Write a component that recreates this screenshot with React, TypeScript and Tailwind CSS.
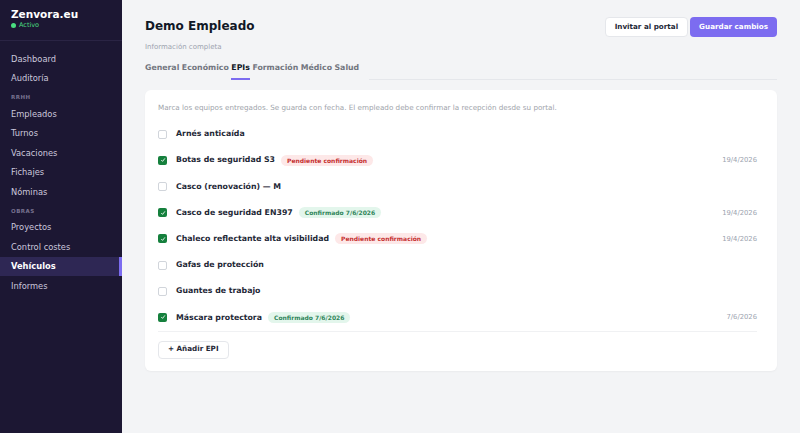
const nav = [
    { type: 'item', label: 'Dashboard' },
    { type: 'item', label: 'Auditoría' },
    { type: 'group', label: 'RRHH' },
    { type: 'item', label: 'Empleados' },
    { type: 'item', label: 'Turnos' },
    { type: 'item', label: 'Vacaciones' },
    { type: 'item', label: 'Fichajes' },
    { type: 'item', label: 'Nóminas' },
    { type: 'group', label: 'OBRAS' },
    { type: 'item', label: 'Proyectos' },
    { type: 'item', label: 'Control costes' },
    { type: 'item', label: 'Vehículos', active: true },
    { type: 'item', label: 'Informes' },
]

const tabs = ['General', 'Económico', 'EPIs', 'Formación', 'Médico', 'Salud']

type Epi = {
    name: string
    checked: boolean
    status?: 'pending' | 'confirmed'
    statusText?: string
    date?: string
}

const epis: Epi[] = [
    { name: 'Arnés anticaída', checked: false },
    { name: 'Botas de seguridad S3', checked: true, status: 'pending', statusText: 'Pendiente confirmación', date: '19/4/2026' },
    { name: 'Casco (renovación) — M', checked: false },
    { name: 'Casco de seguridad EN397', checked: true, status: 'confirmed', statusText: 'Confirmado 7/6/2026', date: '19/4/2026' },
    { name: 'Chaleco reflectante alta visibilidad', checked: true, status: 'pending', statusText: 'Pendiente confirmación', date: '19/4/2026' },
    { name: 'Gafas de protección', checked: false },
    { name: 'Guantes de trabajo', checked: false },
    { name: 'Máscara protectora', checked: true, status: 'confirmed', statusText: 'Confirmado 7/6/2026', date: '7/6/2026' },
]

export default function App() {
    return (
        <div className="flex h-[433px] w-full overflow-hidden bg-[#f3f4f6] font-['DejaVu_Sans',sans-serif]">
            <Sidebar></Sidebar>
            <Main></Main>
        </div>
    )
}

const Sidebar = function () {
    return (
        <div className="w-[122px] shrink-0 bg-[#1c1733] flex flex-col">
            <div className="px-[11px] pt-[8px] pb-[10px] border-b border-[#2a2444]">
                <div className="text-[10.5px] leading-[13px] font-bold text-white">Zenvora.eu</div>
                <div className="flex items-center gap-[3px] text-[6.5px] leading-[9px] text-[#4ade80]">
                    <span className="w-[5px] h-[5px] rounded-full bg-[#4ade80]"></span>
                    Activo
                </div>
            </div>
            <div className="pt-[8px] flex flex-col">
                {nav.map((n) =>
                    n.type === 'group' ? (
                        <div key={n.label} className="h-[16px] pl-[11px] pt-[6px] text-[5.5px] leading-[7px] font-bold tracking-[0.5px] text-[#77718f]">
                            {n.label}
                        </div>
                    ) : (
                        <div
                            key={n.label}
                            className={
                                n.active
                                    ? 'h-[19.5px] flex items-center pl-[11px] text-[8.3px] font-bold text-white bg-[#2e2754] border-r-[3px] border-[#7c6cf0]'
                                    : 'h-[19.5px] flex items-center pl-[11px] text-[8.3px] text-[#cbc7dc]'
                            }
                        >
                            {n.label}
                        </div>
                    )
                )}
            </div>
        </div>
    )
}

const Main = function () {
    return (
        <div className="flex-1 px-[23px] pt-[18px]">
            <div className="flex justify-between items-start">
                <div>
                    <div className="text-[12px] leading-[16px] font-bold text-[#111827]">Demo Empleado</div>
                    <div className="mt-[8px] text-[7px] leading-[10px] text-[#9ca3af]">Información completa</div>
                </div>
                <div className="flex gap-[2px] -mt-[1px]">
                    <div className="h-[20px] px-[9px] flex items-center bg-white border border-[#e5e7eb] rounded-[4px] text-[7.2px] font-bold text-[#1f2937]">
                        Invitar al portal
                    </div>
                    <div className="h-[20px] px-[9px] flex items-center bg-[#7c6cf0] rounded-[4px] text-[7.2px] font-bold text-white">
                        Guardar cambios
                    </div>
                </div>
            </div>
            <div className="mt-[10px] flex">
                <div className="flex gap-[2.5px]">
                    {tabs.map((t) => (
                        <div
                            key={t}
                            className={
                                t === 'EPIs'
                                    ? 'pb-[4px] border-b-2 border-[#7c6cf0] text-[7.8px] leading-[12px] font-bold text-[#111827]'
                                    : 'pb-[4px] border-b-2 border-transparent text-[7.8px] leading-[12px] font-bold text-[#72767f]'
                            }
                        >
                            {t}
                        </div>
                    ))}
                </div>
                <div className="flex-1 ml-[10px] border-b border-[#e5e7eb]"></div>
            </div>
            <div className="mt-[10px] bg-white rounded-[6px] shadow-[0_1px_2px_rgba(0,0,0,0.04)] pl-[13px] pr-[20px] pt-[13px] pb-[12px]">
                <div className="text-[7.2px] leading-[10px] text-[#a0a4ab] mb-[8px]">
                    Marca los equipos entregados. Se guarda con fecha. El empleado debe confirmar la recepción desde su portal.
                </div>
                {epis.map((e) => (
                    <div key={e.name} className="h-[26.2px] flex items-center">
                        {e.checked ? (
                            <div className="w-[9px] h-[9px] rounded-[2px] bg-[#15803d] flex items-center justify-center">
                                <svg width="6" height="6" viewBox="0 0 10 10">
                                    <path d="M2.5 5.5 L4.3 7.3 L7.8 2.8" fill="none" stroke="white" strokeWidth="1.4" strokeLinecap="round" strokeLinejoin="round" />
                                </svg>
                            </div>
                        ) : (
                            <div className="w-[9px] h-[9px] rounded-[2px] border border-[#d1d5db] bg-white"></div>
                        )}
                        <div className="ml-[9px] text-[7.8px] font-bold text-[#1f2937]">{e.name}</div>
                        {e.status === 'pending' && (
                            <div className="ml-[6px] px-[6px] h-[11px] flex items-center rounded-full bg-[#fde8e8] text-[6px] font-bold text-[#c53030]">
                                {e.statusText}
                            </div>
                        )}
                        {e.status === 'confirmed' && (
                            <div className="ml-[6px] px-[6px] h-[11px] flex items-center rounded-full bg-[#e3f6ec] text-[6px] font-bold text-[#2f855a]">
                                {e.statusText}
                            </div>
                        )}
                        <div className="ml-auto text-[6.8px] text-[#9ca3af]">{e.date}</div>
                    </div>
                ))}
                <div className="border-t border-[#f0f1f3] pt-[9px] flex">
                    <div className="flex h-[18px] px-[9px] items-center bg-white border border-[#e5e7eb] rounded-[4px] text-[7.2px] font-bold text-[#1f2937]">
                        + Añadir EPI
                    </div>
                </div>
            </div>
        </div>
    )
}
